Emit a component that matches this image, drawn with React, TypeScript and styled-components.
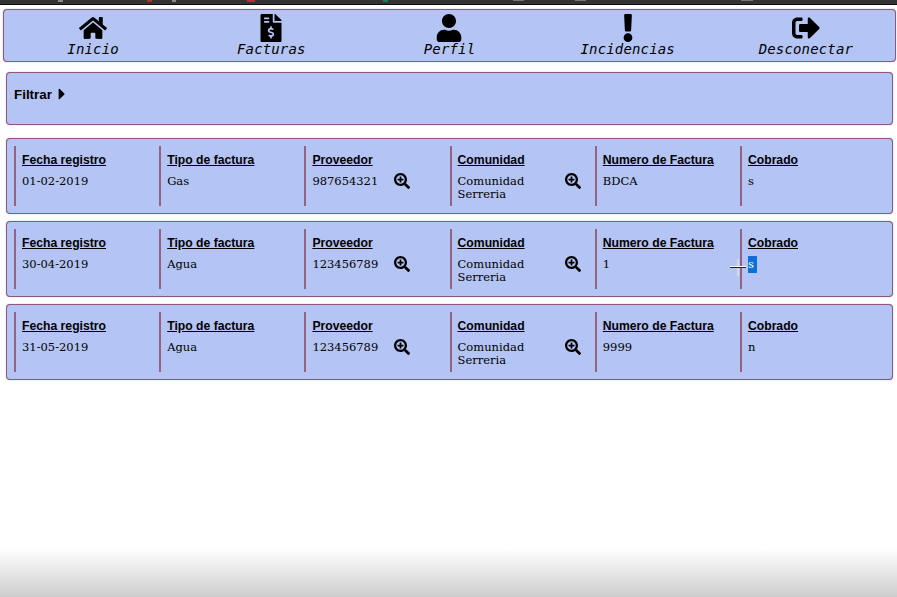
import React from "react";
import styled, { createGlobalStyle } from "styled-components";
import {
  FaCaretRight,
  FaExclamation,
  FaFileInvoiceDollar,
  FaHome,
  FaSearchPlus,
  FaSignOutAlt,
  FaUser,
} from "react-icons/fa";

const GlobalStyle = createGlobalStyle`
  html, body {
    margin: 0;
    padding: 0;
    background: #fff;
  }
  body {
    font-family: "Liberation Sans", Arial, sans-serif;
    color: #000;
    height: 597px;
    overflow: hidden;
  }
`;

const Page = styled.div`
  position: relative;
  width: 897px;
  height: 597px;
  overflow: hidden;
`;

const TopStrip = styled.div`
  height: 5px;
  box-sizing: border-box;
  border-bottom: 1px solid #0c0c0c;
  background-color: #343434;
  background-repeat: no-repeat;
  background-image:
    linear-gradient(#8a8a8a, #8a8a8a),
    linear-gradient(#a33a2a, #a33a2a),
    linear-gradient(#8a8a8a, #8a8a8a),
    linear-gradient(#c9283a, #c9283a),
    linear-gradient(#1f7a5a, #1f7a5a),
    linear-gradient(#777, #777),
    linear-gradient(#777, #777),
    linear-gradient(#777, #777);
  background-size: 5px 2px, 5px 2px, 4px 2px, 8px 2px, 5px 2px, 11px 1px, 11px 1px, 12px 1px;
  background-position: 58px 0, 147px 0, 172px 0, 247px 0, 383px 0, 513px 0, 575px 0, 741px 0;
`;

const Panel = styled.div`
  background: #b4c4f4;
  border: 1px solid #8c5a78;
  border-radius: 4px;
  box-sizing: border-box;
  box-shadow: 0 0 1px #8c5a78;
`;

const NavBar = styled(Panel)`
  margin: 4px 1px 0 3px;
  height: 53px;
  display: grid;
  grid-template-columns: repeat(5, 1fr);
  padding: 3px 0 0;
`;

const NavItem = styled.a`
  display: flex;
  flex-direction: column;
  align-items: center;
  color: #000;
  font: oblique 14px "DejaVu Sans Mono", monospace;
  letter-spacing: 0.15px;
  line-height: 15px;
`;

const NavIcon = styled.span`
  height: 29px;
  display: flex;
  align-items: center;
  font-size: 28px;
`;

const Content = styled.div`
  margin: 10px 4px 0 6px;
  display: flex;
  flex-direction: column;
`;

const FilterPanel = styled(Panel)`
  height: 53px;
  margin-bottom: 13px;
  padding: 14px 7px;
  font-size: 13.4px;
  font-weight: bold;
  line-height: 16px;
`;

const FilterToggle = styled.span`
  display: inline-flex;
  align-items: center;
  gap: 1px;
  svg {
    font-size: 18px;
    margin-top: -2px;
  }
`;

const Card = styled(Panel)`
  height: 76px;
  margin-bottom: 7px;
  padding: 7px 5px 7px 7px;
  display: grid;
  grid-template-columns: repeat(6, 145.2px);
`;

const Column = styled.div`
  border-left: 2px solid #96627f;
  padding: 7px 6px 0 6px;
  box-sizing: border-box;
`;

const Label = styled.div`
  font-size: 12.2px;
  font-weight: bold;
  text-decoration: underline;
  line-height: 14px;
  white-space: nowrap;
`;

const Value = styled.div`
  margin-top: 8px;
  font: 11.5px/13px "DejaVu Serif", serif;
  display: flex;
  align-items: flex-start;
`;

const ValueText = styled.span<{ $wide?: boolean }>`
  width: ${(p) => (p.$wide ? "107px" : "82px")};
  flex: none;
`;

const Selected = styled.span`
  background: #0f6fd6;
  color: #fff;
  padding: 2px 0;
  width: 9px;
  display: inline-block;
  line-height: 13px;
  margin-top: -2px;
`;

const ZoomIcon = styled(FaSearchPlus)`
  font-size: 16px;
  flex: none;
  margin-top: -2px;
`;

const BottomShade = styled.div`
  position: absolute;
  left: 0;
  right: 0;
  bottom: 0;
  height: 48px;
  background: linear-gradient(to bottom, rgba(205, 205, 205, 0), rgba(205, 205, 205, 1));
`;

const CursorH = styled.div`
  position: absolute;
  left: 730px;
  top: 266px;
  width: 16px;
  height: 1px;
  background: #fff;
  box-shadow: 0 1px 0 #222;
`;

const CursorV = styled.div`
  position: absolute;
  left: 737px;
  top: 259px;
  width: 2px;
  height: 17px;
  background: rgba(225, 225, 225, 0.75);
`;

const navItems = [
  { label: "Inicio", icon: <FaHome /> },
  { label: "Facturas", icon: <FaFileInvoiceDollar /> },
  { label: "Perfil", icon: <FaUser /> },
  { label: "Incidencias", icon: <FaExclamation /> },
  { label: "Desconectar", icon: <FaSignOutAlt /> },
];

const invoices = [
  { date: "01-02-2019", type: "Gas", provider: "987654321", number: "BDCA", paid: "s" },
  { date: "30-04-2019", type: "Agua", provider: "123456789", number: "1", paid: "s", selected: true },
  { date: "31-05-2019", type: "Agua", provider: "123456789", number: "9999", paid: "n" },
];

const App: React.FC = () => (
  <Page>
    <GlobalStyle />
    <TopStrip />
    <NavBar>
      {navItems.map((item) => (
        <NavItem key={item.label}>
          <NavIcon>{item.icon}</NavIcon>
          {item.label}
        </NavItem>
      ))}
    </NavBar>
    <Content>
      <FilterPanel>
        <FilterToggle>
          Filtrar <FaCaretRight />
        </FilterToggle>
      </FilterPanel>
      {invoices.map((row) => (
        <Card key={row.date}>
          <Column>
            <Label>Fecha registro</Label>
            <Value>{row.date}</Value>
          </Column>
          <Column>
            <Label>Tipo de factura</Label>
            <Value>{row.type}</Value>
          </Column>
          <Column>
            <Label>Proveedor</Label>
            <Value>
              <ValueText>{row.provider}</ValueText>
              <ZoomIcon />
            </Value>
          </Column>
          <Column>
            <Label>Comunidad</Label>
            <Value>
              <ValueText $wide>Comunidad Serreria</ValueText>
              <ZoomIcon />
            </Value>
          </Column>
          <Column>
            <Label>Numero de Factura</Label>
            <Value>{row.number}</Value>
          </Column>
          <Column>
            <Label>Cobrado</Label>
            <Value>{row.selected ? <Selected>{row.paid}</Selected> : row.paid}</Value>
          </Column>
        </Card>
      ))}
    </Content>
    <CursorV />
    <CursorH />
    <BottomShade />
  </Page>
);

export default App;
